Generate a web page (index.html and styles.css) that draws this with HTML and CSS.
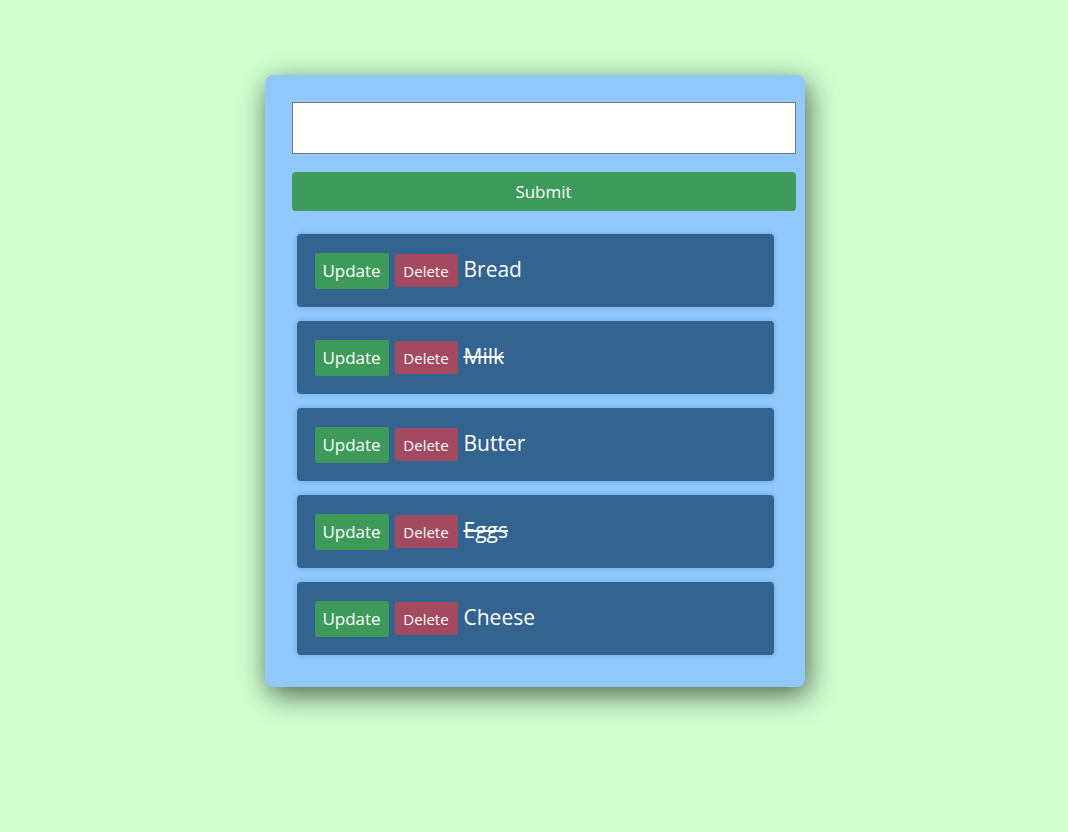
FILE: index.html
```html
<!DOCTYPE html>
<html>
<head>
<meta charset="utf-8">
<link rel="stylesheet" href="styles.css">
</head>
<body>
<div class="card">
  <input class="entry" type="text">
  <button class="submit">Submit</button>
  <ul class="list">
    <li class="item"><button class="upd">Update</button><button class="del">Delete</button><span class="name">Bread</span></li>
    <li class="item"><button class="upd">Update</button><button class="del">Delete</button><span class="name done">Milk</span></li>
    <li class="item"><button class="upd">Update</button><button class="del">Delete</button><span class="name">Butter</span></li>
    <li class="item"><button class="upd">Update</button><button class="del">Delete</button><span class="name done">Eggs</span></li>
    <li class="item"><button class="upd">Update</button><button class="del">Delete</button><span class="name">Cheese</span></li>
  </ul>
</div>
</body>
</html>
```
FILE: styles.css
```css
html {
  background: #cfffd1;
}
body {
  margin: 0;
  padding: 75px 0 80px 1px;
  min-height: 832px;
  box-sizing: border-box;
  background: #cfffd1;
  font-family: "Open Sans", "Noto Sans", sans-serif;
}
.card {
  width: 486px;
  padding: 27px 27px 32px;
  margin: 0 auto;
  background: #90c8fc;
  border-radius: 8px;
  box-shadow: 3px 8px 28px rgba(0, 0, 0, 0.62);
  display: flex;
  flex-direction: column;
}
.entry {
  width: 100%;
  box-sizing: content-box;
  height: 34px;
  padding: 8px;
  margin: 0;
  border: 1px solid #767676;
  background: #fff;
  font-size: 16px;
}
.submit {
  width: 504px;
  height: 39px;
  margin-top: 18px;
  border: none;
  border-radius: 4px;
  background: #3d9a5b;
  color: #fff;
  font-family: inherit;
  font-size: 17px;
}
.list {
  list-style: none;
  margin: 23px 0 0;
  padding: 0 5px;
  display: flex;
  flex-direction: column;
  gap: 14px;
}
.item {
  height: 73px;
  box-sizing: border-box;
  padding: 0 18px;
  background: #33638f;
  border-radius: 4px;
  box-shadow: 0 0 5px rgba(40, 80, 140, 0.3);
  display: flex;
  align-items: center;
  width: 477px;
}
.upd {
  height: 36px;
  width: 74px;
  border: none;
  border-radius: 2px;
  background: #3d9a5b;
  color: #fff;
  font-family: inherit;
  font-size: 17px;
  padding: 0;
  margin-right: 6px;
}
.del {
  height: 33px;
  width: 63px;
  border: none;
  border-radius: 2px;
  background: #a34a60;
  color: #fff;
  font-family: inherit;
  font-size: 15px;
  padding: 0;
  margin-right: 6px;
}
.name {
  color: #fff;
  font-size: 21px;
  margin-top: -4px;
}
.done {
  text-decoration: line-through;
}
```
